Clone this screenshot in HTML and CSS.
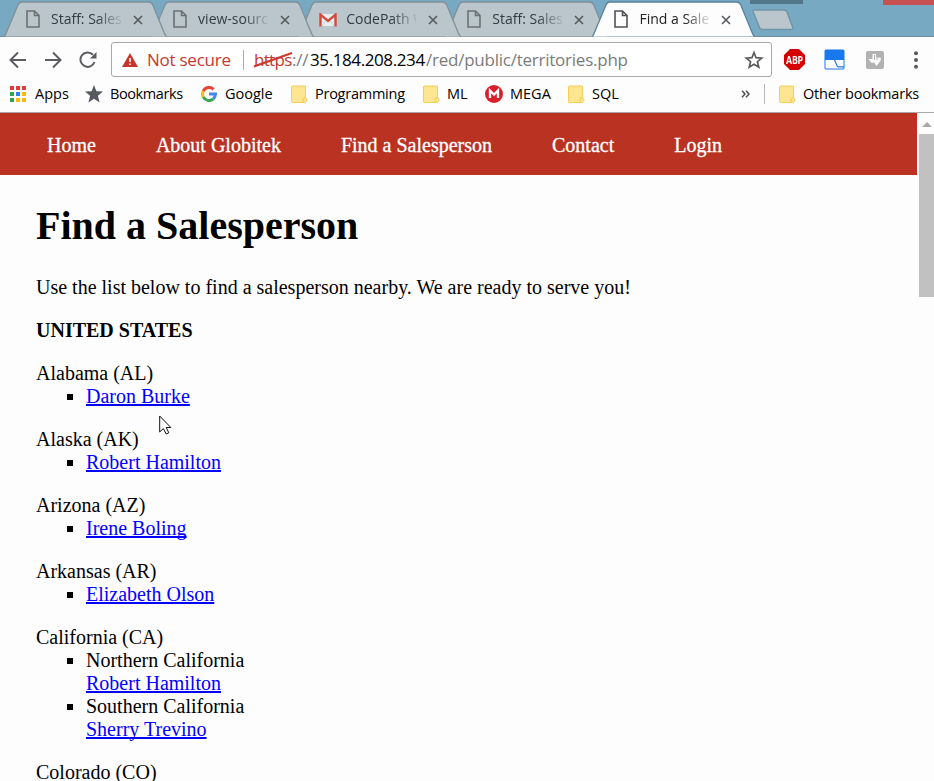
FILE: index.html
```html
<!DOCTYPE html>
<html lang="en">
<head>
<meta charset="utf-8">
<title>Find a Salesperson</title>
<link rel="stylesheet" href="styles.css">
</head>
<body>
<svg class="defs" width="0" height="0">
  <symbol id="tab" viewBox="0 0 164 37"><path d="M0 36.500C1 36 1.500 35 2 33.500L14 5C15 2.800 15.500 2 17.500 2H145C147 2 147.800 3 148.800 5L160.500 33.500C161 35 161.500 36 163 36.500"/></symbol>
  <symbol id="page" viewBox="0 0 14 18"><path d="M1 1H8.500L13 5.500V17H1ZM8.500 1V5.500H13" fill="none" stroke-width="1.600"/></symbol>
  <symbol id="close" viewBox="0 0 10 10"><path d="M1 1L9 9M9 1L1 9" stroke="#555a5e" stroke-width="1.600"/></symbol>
  <symbol id="folder" viewBox="0 0 17 19"><path d="M1.500 1H14.500V12.500C16.500 13 16.500 17 14 17.500H1.500Q.5 17.500 .5 16.500V2Q.5 1 1.500 1Z" fill="#fee591" stroke="#f4ce58"/><path d="M12 17.500V14Q12 12.500 14.500 12.500" fill="none" stroke="#f2c94a"/></symbol>
</svg>
<header class="browser">
  <div class="tabs">
    <div class="tab"><svg class="shape"><use href="#tab"/></svg><svg class="fav"><use href="#page"/></svg><span class="title">Staff: Sales</span><svg class="close"><use href="#close"/></svg></div>
    <div class="tab"><svg class="shape"><use href="#tab"/></svg><svg class="fav"><use href="#page"/></svg><span class="title">view-sourc</span><svg class="close"><use href="#close"/></svg></div>
    <div class="tab"><svg class="shape"><use href="#tab"/></svg><svg class="mail" viewBox="0 0 18 14"><path d="M1 1H17V13H1Z" fill="#e9eeee"/><path d="M1.500 13.500V1.700L9 8L16.500 1.700V13.500" fill="none" stroke="#d14a40" stroke-width="2.400"/><path d="M3 13L7 8M15 13L11 8" stroke="#c7d0d2"/></svg><span class="title">CodePath W</span><svg class="close"><use href="#close"/></svg></div>
    <div class="tab"><svg class="shape"><use href="#tab"/></svg><svg class="fav"><use href="#page"/></svg><span class="title">Staff: Sales</span><svg class="close"><use href="#close"/></svg></div>
    <div class="tab active"><svg class="shape"><use href="#tab"/></svg><svg class="fav"><use href="#page"/></svg><span class="title">Find a Sale</span><svg class="close"><use href="#close"/></svg></div>
    <svg class="newtab" viewBox="0 0 44 22"><path d="M3 1H33Q35 1 36 3L42 19Q42.500 20.500 40.500 20.500H12Q9.500 20.500 8.500 18.500L2 2.500Q1.500 1 3 1Z" fill="#bac6cb" stroke="#6e96ab" stroke-width="1.500"/></svg>
    <i class="cap user"></i><i class="cap exit"></i>
  </div>
  <div class="toolbar">
    <svg class="navi back" viewBox="0 0 18 18"><path d="M17 9H2M9 1.500L1.500 9L9 16.500"/></svg>
    <svg class="navi fwd" viewBox="0 0 18 18"><path d="M1 9H16M9 1.500L16.500 9L9 16.500"/></svg>
    <svg class="navi reload" viewBox="0 0 18 18"><path d="M15.500 11A7.200 7.200 0 1 1 14 3.800"/><path d="M17.500 1V7.500H11Z" class="solid"/></svg>
    <div class="omnibox">
      <svg class="warn" viewBox="0 0 16 14"><path d="M8 0L16 14H0Z" fill="#c93528"/><path d="M8 5V9M8 10.500V12" stroke="#fff" stroke-width="1.600"/></svg>
      <span class="insecure">Not secure</span><i class="rule"></i>
      <span class="scheme">https<svg viewBox="0 0 42 18"><path d="M1 15.500L39 2" stroke="#cc3a2e" stroke-width="2.200"/></svg></span><span class="sep">://</span><span class="host">35.184.208.234</span><span class="path">/red/public/territories.php</span>
      <svg class="star" viewBox="0 0 20 20"><path d="M10 2.500L12.100 7.700L17.700 8.100L13.400 11.700L14.800 17.200L10 14.200L5.200 17.200L6.600 11.700L2.300 8.100L7.900 7.700Z" fill="none" stroke="#5a5a5a" stroke-width="1.700"/></svg>
    </div>
    <div class="abp"><span>ABP</span></div>
    <svg class="ext" viewBox="0 0 21 21"><rect x=".5" y=".5" width="20" height="20" rx="1.500" fill="#1879ee"/><path d="M1.500 11H10L12 16Q12.800 18.500 15 18.500H19.500V19.500H1.500Z" fill="#fff"/><path d="M11.300 11H19.500V17.300H15Q13.800 17.300 13.200 15.800Z" fill="#fff"/></svg>
    <svg class="grey" viewBox="0 0 18 18"><rect width="18" height="18" rx="2" fill="#b2b2b2"/><path d="M6.500 3H10V6L15 7L14.500 10L10.500 15L8 11.500L5.500 12L2.500 8H6.500Z" fill="#fafafa"/><path d="M8.500 4V9M11 6V9" stroke="#b2b2b2"/></svg>
    <svg class="dots" viewBox="0 0 4 18"><circle cx="2" cy="2.200" r="2"/><circle cx="2" cy="9" r="2"/><circle cx="2" cy="15.800" r="2"/></svg>
  </div>
  <div class="bookmarks">
    <span class="bm apps"><i class="grid"><b class="r"></b><b class="r"></b><b class="r"></b><b class="g"></b><b class="b"></b><b class="y"></b><b class="g"></b><b class="y"></b><b class="y"></b></i><span>Apps</span></span>
    <span class="bm marks"><svg viewBox="0 0 18 18" class="i18"><path d="M9 0L11.400 6.200L18 6.600L12.900 10.800L14.600 17.500L9 13.700L3.400 17.500L5.100 10.800L0 6.600L6.600 6.200Z" fill="#55585c"/></svg><span>Bookmarks</span></span>
    <span class="bm google"><svg viewBox="0 0 18 18" class="i16"><g fill="none" stroke-width="3.400"><path d="M14.200 3.800A7.300 7.300 0 0 0 2.500 5.700" stroke="#ea4335"/><path d="M2.500 5.700A7.300 7.300 0 0 0 2.500 12.300" stroke="#fbbc05"/><path d="M2.500 12.300A7.300 7.300 0 0 0 13.700 14.600" stroke="#34a853"/><path d="M13.700 14.600A7.300 7.300 0 0 0 16.300 9H9" stroke="#4285f4"/></g></svg><span>Google</span></span>
    <span class="bm prog"><svg class="folder"><use href="#folder"/></svg><span>Programming</span></span>
    <span class="bm ml"><svg class="folder"><use href="#folder"/></svg><span>ML</span></span>
    <span class="bm mega"><svg viewBox="0 0 18 18" class="i18"><circle cx="9" cy="9" r="9" fill="#d9202a"/><path d="M5 13V5.500L9 9.500L13 5.500V13" fill="none" stroke="#fff" stroke-width="2.300"/></svg><span>MEGA</span></span>
    <span class="bm sql"><svg class="folder"><use href="#folder"/></svg><span>SQL</span></span>
    <svg class="more" viewBox="0 0 9 8"><path d="M1 .7L4 4L1 7.300M5 .7L8 4L5 7.300" fill="none" stroke="#505050" stroke-width="1.500"/></svg>
    <i class="split"></i>
    <span class="bm other"><svg class="folder"><use href="#folder"/></svg><span>Other bookmarks</span></span>
  </div>
</header>
<div class="viewport">
  <div class="document">
    <nav><a>Home</a><a>About Globitek</a><a>Find a Salesperson</a><a>Contact</a><a>Login</a></nav>
    <main>
      <h1>Find a Salesperson</h1>
      <p>Use the list below to find a salesperson nearby. We are ready to serve you!</p>
      <p><strong>UNITED STATES</strong></p>
      <section>Alabama (AL)<ul><li><a href="#">Daron Burke</a></li></ul></section>
      <section>Alaska (AK)<ul><li><a href="#">Robert Hamilton</a></li></ul></section>
      <section>Arizona (AZ)<ul><li><a href="#">Irene Boling</a></li></ul></section>
      <section>Arkansas (AR)<ul><li><a href="#">Elizabeth Olson</a></li></ul></section>
      <section>California (CA)<ul><li>Northern California<br><a href="#">Robert Hamilton</a></li><li>Southern California<br><a href="#">Sherry Trevino</a></li></ul></section>
      <section>Colorado (CO)</section>
    </main>
  </div>
  <div class="scrollbar"><svg viewBox="0 0 10 5"><path d="M5 0L10 5H0Z" fill="#a9a9a9"/></svg><i></i></div>
</div>
<svg class="cursor" viewBox="0 0 13 20"><path d="M.7 1V17L4.300 13.600L7.200 19L9.800 17.800L7.200 12.500H11.800Z" fill="#fff" stroke="#111" stroke-width="1"/></svg>
</body>
</html>
```
FILE: styles.css
```css
* { box-sizing: border-box; }
html, body { height: 100%; }
body { margin: 0; display: flex; flex-direction: column; overflow: hidden; background: #fdfdfd; color: #000; font: 20px/23px "Liberation Serif", serif; }
svg { display: block; flex: none; }
.defs { position: absolute; }
.browser { flex: none; height: 113px; border-bottom: 1px solid #a9a9a9; background: #fdfdfd; font: 15px/20px "Open Sans", "Noto Sans", sans-serif; }

.tabs { position: relative; display: flex; height: 37px; padding-left: 4px; background: #78a9c3; border-bottom: 1px solid #6e8c9b; }
.tab { position: relative; z-index: 1; display: flex; align-items: center; flex: none; width: 163px; height: 37px; margin-right: -15.9px; padding-left: 22px; }
.tab:nth-child(1) { z-index: 4; }
.tab:nth-child(2) { z-index: 3; }
.tab:nth-child(3) { z-index: 2; }
.tab.active { z-index: 5; }
.shape { position: absolute; left: 0; top: 0; width: 164px; height: 37px; fill: #bac6cb; stroke: #7f909a; stroke-width: 1.3; }
.active .shape { fill: #fdfdfd; stroke: #59839a; }
.fav { position: relative; width: 14px; height: 18px; margin-top: 1px; fill: none; stroke: #6b7275; }
.active .fav { stroke: #505255; }
.mail { position: relative; width: 18px; height: 14px; margin: 2px 0 0 -1px; }
.title { position: relative; width: 70px; margin-left: 11px; overflow: hidden; white-space: nowrap; font-size: 14px; color: #303b42; -webkit-mask-image: linear-gradient(90deg, #000 65%, transparent 105%); mask-image: linear-gradient(90deg, #000 65%, transparent 105%); }
.active .title { color: #222; }
.mail + .title { margin-left: 9px; }
.close { position: relative; width: 10px; height: 10px; margin: 2px 0 0 12px; }
.newtab { width: 44px; height: 22px; margin: 9px 0 0 11px; }
.cap { position: absolute; top: 0; }
.user { left: 750px; width: 53px; height: 4px; background: #53778a; }
.exit { left: 883px; width: 51px; height: 5px; background: #c75050; }

.toolbar { display: flex; align-items: center; height: 45px; padding-left: 9px; }
.navi { width: 18px; height: 18px; fill: none; stroke: #5a5c5f; stroke-width: 2; }
.fwd, .reload { margin-left: 17px; }
.navi .solid { fill: #5a5c5f; stroke: none; }
.omnibox { display: flex; align-items: center; flex: none; width: 661px; height: 35px; margin-left: 14px; padding-left: 10px; border: 1px solid #a9a9a9; border-radius: 3px; background: #fff; font-size: 17px; white-space: nowrap; }
.warn { width: 16px; height: 14px; }
.insecure { width: 84px; margin-left: 9px; color: #c5392d; letter-spacing: -.25px; }
.rule { width: 1px; height: 20px; margin: 0 10px 0 12px; background: #aaa; }
.scheme { position: relative; width: 38px; color: #c5392d; letter-spacing: -.7px; }
.scheme svg { position: absolute; left: -1px; top: 1px; width: 42px; height: 18px; }
.sep, .path { color: #7b7b7b; }
.sep { width: 18px; letter-spacing: -.2px; }
.host { width: 116px; letter-spacing: -.4px; }
.path { letter-spacing: -.24px; }
.star { width: 20px; height: 20px; margin: 0 7px 0 auto; }
.abp { display: flex; align-items: center; justify-content: center; width: 21px; height: 21px; margin-left: 12px; background: #d50000; clip-path: polygon(29% 0, 71% 0, 100% 29%, 100% 71%, 71% 100%, 29% 100%, 0 71%, 0 29%); color: #fff; font: bold 11px/20px "Open Sans", sans-serif; letter-spacing: -.3px; }
.abp span { flex: none; transform: scaleX(.8); }
.ext { width: 21px; height: 21px; margin-left: 19px; }
.grey { width: 18px; height: 18px; margin-left: 20.500px; }
.dots { width: 4px; height: 18px; margin-left: 30px; fill: #5a5c5f; }

.bookmarks { display: flex; align-items: center; height: 24px; padding-left: 10px; white-space: nowrap; font-size: 14.5px; }
.bm { display: flex; align-items: center; flex: none; }
.apps { width: 75px; gap: 8px; }
.marks { width: 115px; gap: 7px; letter-spacing: -.4px; }
.google { width: 91px; gap: 8px; }
.prog { width: 132px; letter-spacing: -.25px; }
.ml { width: 62px; }
.mega { width: 83px; gap: 7px; }
.sql { width: 60px; }
.other { letter-spacing: -.2px; }
.i18 { width: 18px; height: 18px; }
.i16 { width: 16px; height: 16px; margin-left: 1px; }
.folder { width: 17px; height: 19px; margin-right: 7px; }
.grid { display: grid; grid-template-columns: repeat(3, 4px); gap: 2px; width: 17px; }
.grid b { height: 4px; }
.r { background: #e53935; }
.g { background: #2ea44f; }
.b { background: #2f80ed; }
.y { background: #fbb90a; }
.more { width: 9px; height: 8px; margin-left: 113px; }
.split { width: 1px; height: 20px; margin: 0 14px; background: #b9b9b9; }

.viewport { display: flex; flex: 1; min-height: 0; }
.document { flex: 1; overflow: hidden; }
nav { display: flex; align-items: center; gap: 60px; height: 62px; padding: 3px 0 0 47px; background: #b93222; color: #fff; -webkit-text-stroke: .3px #fff; }
main { padding: 28px 36px 0; }
h1 { margin: 0 0 27px; font-size: 40px; line-height: 46px; }
p { margin: 0 0 20px; }
section { margin-bottom: 20px; }
ul { margin: 0; padding-left: 50px; list-style: none; }
li { position: relative; }
li::before { content: ""; position: absolute; left: -19px; top: 9px; width: 6px; height: 6px; background: #000; }
a[href] { color: #0000ff; text-decoration: underline 2px; text-underline-offset: 1px; text-decoration-skip-ink: none; }
.scrollbar { display: flex; flex-direction: column; align-items: center; width: 17px; padding: 9px 0 0 2px; }
.scrollbar svg { width: 10px; height: 5px; }
.scrollbar i { width: 15px; height: 163px; margin-top: 7px; background: #c1c1c1; }
.cursor { position: absolute; left: 159px; top: 415px; width: 13px; height: 20px; }
```
